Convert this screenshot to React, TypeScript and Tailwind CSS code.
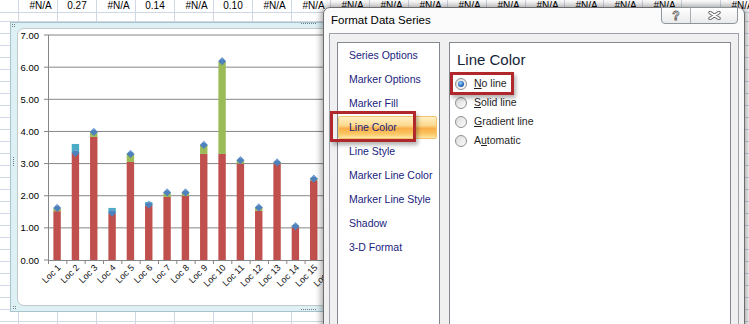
import React from "react";

// stacked values per location: red base, green and teal on top, marker = total
const data = [
  { red: 1.52, green: 0.08, teal: 0, marker: 1.62 },
  { red: 3.33, green: 0, teal: 0.28, marker: 3.33 },
  { red: 3.83, green: 0.15, teal: 0, marker: 3.98 },
  { red: 1.45, green: 0, teal: 0.17, marker: 1.47 },
  { red: 3.05, green: 0.25, teal: 0, marker: 3.3 },
  { red: 1.7, green: 0, teal: 0.1, marker: 1.72 },
  { red: 1.96, green: 0.12, teal: 0, marker: 2.1 },
  { red: 2.0, green: 0.1, teal: 0, marker: 2.1 },
  { red: 3.3, green: 0.28, teal: 0, marker: 3.58 },
  { red: 3.3, green: 2.86, teal: 0, marker: 6.18 },
  { red: 3.0, green: 0.1, teal: 0, marker: 3.1 },
  { red: 1.53, green: 0.1, teal: 0, marker: 1.63 },
  { red: 3.0, green: 0.03, teal: 0, marker: 3.03 },
  { red: 1.02, green: 0.05, teal: 0, marker: 1.05 },
  { red: 2.48, green: 0.07, teal: 0, marker: 2.53 },
  { red: 2.9, green: 0, teal: 0, marker: 2.9 },
];

const Y0 = 260;
const UNIT = 32.14;
const X0 = 48;
const STEP = 18.33;
const yOf = (v: number) => Y0 - v * UNIT;

const topRow = [
  "", "#N/A", "0.27", "#N/A", "0.14", "#N/A", "0.10", "#N/A", "#N/A", "#N/A",
  "#N/A", "#N/A", "#N/A", "#N/A", "#N/A", "#N/A", "#N/A", "#N/A", "", "#N/A",
];

const navItems = [
  "Series Options",
  "Marker Options",
  "Marker Fill",
  "Line Color",
  "Line Style",
  "Marker Line Color",
  "Marker Line Style",
  "Shadow",
  "3-D Format",
];

function Sheet() {
  const rows = Array.from({ length: 26 });
  return (
    <div className="flex flex-col">
      {/* row with the values */}
      <div className="flex h-[13px]">
        {topRow.map((t, i) => (
          <div
            key={i}
            className={`flex h-[13px] shrink-0 items-start justify-center border-b border-r border-[#d0d7e5] text-[10px] leading-[12px] text-black ${
              i === 0 ? "w-[19px]" : "w-[39px]"
            } ${t === "#N/A" ? "pl-[5px]" : ""}`}
          >
            {t}
          </div>
        ))}
      </div>
      <div className="flex h-[9px]">
        {topRow.map((_, i) => (
          <div
            key={i}
            className={`h-[9px] shrink-0 border-b border-r border-[#d0d7e5] ${i === 0 ? "w-[19px]" : "w-[39px]"}`}
          />
        ))}
      </div>
      {rows.map((_, r) => (
        <div key={r} className="flex h-[12px]">
          {topRow.map((_, i) => (
            <div
              key={i}
              className={`h-[12px] shrink-0 border-b border-r border-[#d0d7e5] ${i === 0 ? "w-[19px]" : "w-[39px]"}`}
            />
          ))}
        </div>
      ))}
    </div>
  );
}

function Dots({ cols, rows }: { cols: number; rows: number }) {
  return (
    <svg width={cols * 2} height={rows * 2}>
      {Array.from({ length: cols * rows }).map((_, k) => (
        <rect key={k} x={(k % cols) * 2} y={Math.floor(k / cols) * 2} width="1" height="1" fill="#6f8088" />
      ))}
    </svg>
  );
}

function Chart() {
  const grid = [1, 2, 3, 4, 5, 6, 7];
  return (
    <div className="absolute left-[10px] top-[22px] h-[290px] w-[600px] border border-[#a8c3cb] bg-[#ddf1f5] px-[6px] py-[5px]">
      <div className="relative h-full w-full overflow-hidden rounded-[7px] border border-[#c2c8cc] bg-white">
        <svg width="584" height="276" viewBox="18 29 584 276" className="absolute left-0 top-0">
          {grid.map((g) => (
            <line key={g} x1={X0} x2={610} y1={yOf(g)} y2={yOf(g)} stroke="#868686" strokeWidth="1" />
          ))}
          <line x1={X0} x2={610} y1={Y0 + 0.5} y2={Y0 + 0.5} stroke="#868686" />
          <line x1={X0 + 0.5} x2={X0 + 0.5} y1={yOf(7)} y2={Y0} stroke="#868686" />
          {[0, ...grid].map((g) => (
            <line key={g} x1={44} x2={X0} y1={yOf(g)} y2={yOf(g)} stroke="#868686" />
          ))}
          {data.map((_, i) => (
            <line key={i} x1={X0 + STEP * i + 0.5} x2={X0 + STEP * i + 0.5} y1={Y0} y2={Y0 + 4} stroke="#868686" />
          ))}
          {[0, ...grid].map((g) => (
            <text
              key={g}
              x={39}
              y={yOf(g) + 3.5}
              textAnchor="end"
              fontSize="9.5"
              fontFamily="'Liberation Sans', Arial, sans-serif"
              fill="#000"
            >
              {g.toFixed(2)}
            </text>
          ))}
          {data.map((d, i) => {
            const left = X0 + STEP * i + 5.4;
            const cx = X0 + STEP * i + STEP / 2;
            const mY = yOf(d.marker);
            return (
              <g key={i}>
                <rect x={left} y={yOf(d.red)} width={7.4} height={d.red * UNIT} fill="#c0504d" />
                {d.green > 0 && (
                  <rect x={left} y={yOf(d.red + d.green)} width={7.4} height={d.green * UNIT} fill="#9bbb59" />
                )}
                {d.teal > 0 && (
                  <rect x={left} y={yOf(d.red + d.teal)} width={7.4} height={d.teal * UNIT} fill="#4bacc6" />
                )}
                <polygon
                  points={`${cx},${mY - 4} ${cx + 4},${mY} ${cx},${mY + 4} ${cx - 4},${mY}`}
                  fill="#4f81bd"
                />
                <polygon points={`${cx},${mY - 4} ${cx + 2},${mY - 2} ${cx - 2},${mY - 2}`} fill="#7ea6d8" />
                <text
                  transform={`translate(${cx + 2} 266) rotate(-45)`}
                  textAnchor="end"
                  dy="0.35em"
                  fontSize="9"
                  fontFamily="'Liberation Sans', Arial, sans-serif"
                  fill="#111"
                >
                  {`Loc ${i + 1}`}
                </text>
              </g>
            );
          })}
        </svg>
      </div>
      {/* selection handles */}
      <div className="absolute left-[1px] top-[1px]">
        <Dots cols={2} rows={2} />
      </div>
      <div className="absolute left-[290px] top-[0px]">
        <Dots cols={8} rows={1} />
      </div>
      <div className="absolute left-[2px] top-[134px]">
        <Dots cols={1} rows={5} />
      </div>
      <div className="absolute bottom-[1px] left-[2px]">
        <Dots cols={2} rows={2} />
      </div>
      <div className="absolute bottom-[0px] left-[290px]">
        <Dots cols={8} rows={1} />
      </div>
    </div>
  );
}

function Radio({ checked, children }: { checked?: boolean; children: React.ReactNode }) {
  return (
    <div className="flex h-[19px] items-center gap-[7px]">
      <span className="flex h-[12px] w-[12px] items-center justify-center rounded-full border border-[#8e8f8f] bg-[linear-gradient(135deg,#dcdcdc,#fbfbfb)]">
        {checked && (
          <span className="h-[6px] w-[6px] rounded-full bg-[radial-gradient(circle_at_40%_35%,#9ad0ff,#2a6fc0_55%,#123d78)]" />
        )}
      </span>
      <span className="text-[10.5px] leading-none text-[#1e1e1e]">{children}</span>
    </div>
  );
}

function Dialog() {
  return (
    <div className="absolute left-[323px] top-[7px] flex h-[340px] w-[422px] flex-col rounded-t-[7px] border border-[#6e6e6e] bg-[linear-gradient(to_bottom,#fbfbfb,#eeeeee)] shadow-[0_0_6px_2px_rgba(0,0,0,0.35)]">
      {/* title bar */}
      <div className="relative flex h-[25px] items-center pl-[7px] text-[11.5px] text-black">
        Format Data Series
        <div className="absolute right-[6px] top-[-1px] flex h-[17px] w-[77px] overflow-hidden rounded-b-[4px] border border-[#8d949a] bg-[linear-gradient(to_bottom,#ffffff,#eaeaea)]">
          <div className="flex h-full w-[29px] items-center justify-center border-r border-[#a6acb2] text-[12px] font-bold leading-none text-white [-webkit-text-stroke:0.8px_#5e5e5e]">
            ?
          </div>
          <div className="flex h-full flex-1 items-center justify-center">
            <svg width="13" height="9" viewBox="0 0 13 9">
              <path d="M2 1.5 L11 7.5 M11 1.5 L2 7.5" stroke="#666" strokeWidth="3.4" strokeLinecap="round" />
              <path d="M2 1.5 L11 7.5 M11 1.5 L2 7.5" stroke="#fff" strokeWidth="1.6" strokeLinecap="round" />
            </svg>
          </div>
        </div>
      </div>
      {/* client area */}
      <div className="mx-[5px] flex flex-1 gap-[9px] border border-[#9da3a8] bg-[#f0f0f0] pl-[7px] pr-[7px] pt-[8px]">
        <div className="h-[300px] w-[103px] shrink-0 border border-[#828790] bg-white pt-[1px]">
          {navItems.map((item) => (
            <div key={item} className="flex h-[24px] items-start">
              {item === "Line Color" ? (
                <div className="flex h-[23px] w-[99px] items-center rounded-[2px] border border-[#f1c46e] bg-[linear-gradient(to_bottom,#fff0c4_0%,#fdd98e_40%,#f9ae48_55%,#fbc662_80%,#fde7a6_100%)] pl-[10px] text-[10.5px] text-[#1a237e]">
                  {item}
                </div>
              ) : (
                <div className="flex h-[24px] items-center pl-[11px] text-[10.5px] text-[#1a237e]">{item}</div>
              )}
            </div>
          ))}
        </div>
        <div className="h-[300px] w-[282px] shrink-0 border border-[#828790] bg-white pt-[7px]">
          <div className="h-[20px] pl-[7px] text-[15px] leading-[20px] text-[#16243a]">Line Color</div>
          <div className="mt-[4px] pl-[5px]">
            <Radio checked>
              <span className="underline">N</span>o line
            </Radio>
            <Radio>
              <span className="underline">S</span>olid line
            </Radio>
            <Radio>
              <span className="underline">G</span>radient line
            </Radio>
            <Radio>
              A<span className="underline">u</span>tomatic
            </Radio>
          </div>
        </div>
      </div>
    </div>
  );
}

export default function App() {
  return (
    <div className="relative h-[324px] w-[749px] overflow-hidden bg-white font-['Liberation_Sans',Arial,sans-serif]">
      <Sheet />
      <Chart />
      <Dialog />
      {/* red callouts */}
      <div className="absolute left-[330px] top-[111px] h-[31px] w-[86px] border-[3px] border-[#b0282c] shadow-[2px_3px_4px_rgba(0,0,0,0.3)]" />
      <div className="absolute left-[450px] top-[72px] h-[23px] w-[64px] border-[3px] border-[#b0282c] shadow-[2px_3px_4px_rgba(0,0,0,0.3)]" />
    </div>
  );
}
